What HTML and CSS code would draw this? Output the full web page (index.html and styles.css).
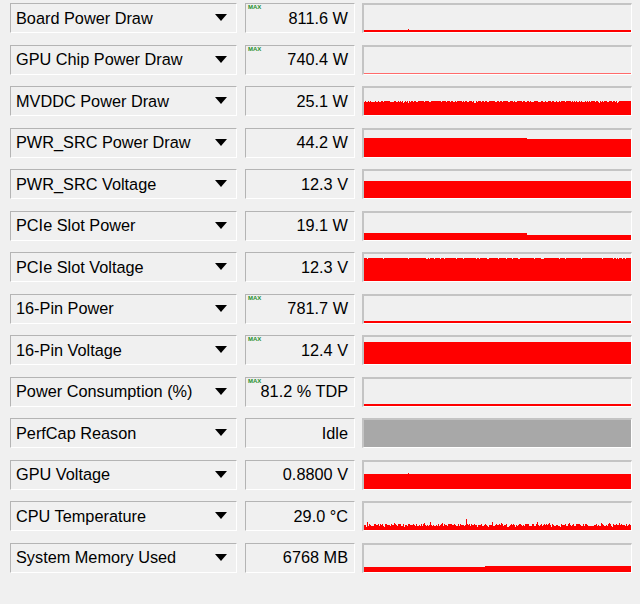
FILE: index.html
```html
<!DOCTYPE html>
<html lang="en">
<head>
<meta charset="utf-8">
<title>Sensors</title>
<link rel="stylesheet" href="styles.css">
</head>
<body>
<div class="sensors">
  <div class="row">
    <div class="name"><span>Board Power Draw</span><i class="arrow"></i></div>
    <div class="value"><b class="max">MAX</b><span>811.6 W</span></div>
    <div class="graph"></div>
  </div>
  <div class="row">
    <div class="name"><span>GPU Chip Power Draw</span><i class="arrow"></i></div>
    <div class="value"><b class="max">MAX</b><span>740.4 W</span></div>
    <div class="graph"></div>
  </div>
  <div class="row">
    <div class="name"><span>MVDDC Power Draw</span><i class="arrow"></i></div>
    <div class="value"><span>25.1 W</span></div>
    <div class="graph"></div>
  </div>
  <div class="row">
    <div class="name"><span>PWR_SRC Power Draw</span><i class="arrow"></i></div>
    <div class="value"><span>44.2 W</span></div>
    <div class="graph"></div>
  </div>
  <div class="row">
    <div class="name"><span>PWR_SRC Voltage</span><i class="arrow"></i></div>
    <div class="value"><span>12.3 V</span></div>
    <div class="graph"></div>
  </div>
  <div class="row">
    <div class="name"><span>PCIe Slot Power</span><i class="arrow"></i></div>
    <div class="value"><span>19.1 W</span></div>
    <div class="graph"></div>
  </div>
  <div class="row">
    <div class="name"><span>PCIe Slot Voltage</span><i class="arrow"></i></div>
    <div class="value"><span>12.3 V</span></div>
    <div class="graph"></div>
  </div>
  <div class="row">
    <div class="name"><span>16-Pin Power</span><i class="arrow"></i></div>
    <div class="value"><b class="max">MAX</b><span>781.7 W</span></div>
    <div class="graph"></div>
  </div>
  <div class="row">
    <div class="name"><span>16-Pin Voltage</span><i class="arrow"></i></div>
    <div class="value"><b class="max">MAX</b><span>12.4 V</span></div>
    <div class="graph"></div>
  </div>
  <div class="row">
    <div class="name"><span>Power Consumption (%)</span><i class="arrow"></i></div>
    <div class="value"><b class="max">MAX</b><span>81.2 % TDP</span></div>
    <div class="graph"></div>
  </div>
  <div class="row">
    <div class="name"><span>PerfCap Reason</span><i class="arrow"></i></div>
    <div class="value"><span>Idle</span></div>
    <div class="graph"></div>
  </div>
  <div class="row">
    <div class="name"><span>GPU Voltage</span><i class="arrow"></i></div>
    <div class="value"><span>0.8800 V</span></div>
    <div class="graph"></div>
  </div>
  <div class="row">
    <div class="name"><span>CPU Temperature</span><i class="arrow"></i></div>
    <div class="value"><span>29.0 °C</span></div>
    <div class="graph"></div>
  </div>
  <div class="row">
    <div class="name"><span>System Memory Used</span><i class="arrow"></i></div>
    <div class="value"><span>6768 MB</span></div>
    <div class="graph"></div>
  </div>
</div>
<script src="graphs.js"></script>
</body>
</html>
```

FILE: styles.css
```css
body {
  margin: 0;
  background: #f0f0f0;
  font-family: "Liberation Sans", Arial, sans-serif;
  color: #000;
}

.sensors {
  display: flex;
  flex-direction: column;
  gap: 11.5px;
  padding: 3px 0 0 10px;
}

.row {
  display: flex;
  height: 30px;
}

.name,
.value {
  box-sizing: border-box;
  border: 1px solid;
  border-color: #b4b4b4 #ffffff #ffffff #b4b4b4;
  font-size: 16.3px;
  display: flex;
  align-items: center;
}

.name {
  width: 227px;
  justify-content: space-between;
  padding: 0 9px 0 5px;
}

.arrow {
  width: 0;
  height: 0;
  border-left: 6px solid transparent;
  border-right: 6px solid transparent;
  border-top: 7px solid #000;
  margin-top: -1px;
}

.value {
  position: relative;
  margin-left: 8px;
  width: 110px;
  justify-content: flex-end;
  padding-right: 6px;
}

.max {
  position: absolute;
  left: 2px;
  top: 0px;
  font-size: 6px;
  line-height: 6px;
  font-weight: bold;
  color: #1f8f2c;
}

.graph {
  box-sizing: border-box;
  margin-left: 7px;
  width: 270px;
  border-style: solid;
  border-width: 2px 1px 1px 2px;
  border-color: #c4c4c4 #ffffff #ffffff #c4c4c4;
  background: #f0f0f0;
}

.graph svg {
  display: block;
  width: 100%;
  height: 100%;
}
```

FILE: graphs.js
```js
// Draws the sensor history graphs as column-by-column area fills.
(function () {
  var W = 267, H = 27;

  function rng(seed) {
    return function () {
      seed |= 0; seed = seed + 0x6D2B79F5 | 0;
      var t = Math.imul(seed ^ seed >>> 15, 1 | seed);
      t = t + Math.imul(t ^ t >>> 7, 61 | t) ^ t;
      return ((t ^ t >>> 14) >>> 0) / 4294967296;
    };
  }

  function steps(levels) {
    return function (x) {
      var h = levels[0][1];
      for (var i = 0; i < levels.length; i++) if (x >= levels[i][0]) h = levels[i][1];
      return h;
    };
  }

  var specs = [
    { base: steps([[0, 2]]), spikes: { 44: 3 } },
    { base: steps([[0, 1]]), color: "#ff6b6b" },
    { base: steps([[0, 14]]), noise: function (r) { return (r() < 0.3 ? -1 : 0) + (r() < 0.08 ? -1 : 0); } },
    { base: steps([[0, 19], [163, 18]]) },
    { base: steps([[0, 17]]) },
    { base: steps([[0, 7], [163, 5]]) },
    { base: steps([[0, 23]]), noise: function (r) { return r() < 0.12 ? -1 : 0; } },
    { base: steps([[0, 2]]) },
    { base: steps([[0, 22]]) },
    { base: steps([[0, 2]]) },
    { base: steps([[0, 27]]), color: "#a8a8a8" },
    { base: steps([[0, 15]]), spikes: { 44: 16 } },
    {
      base: steps([[0, 4]]),
      noise: function (r) { return Math.floor(r() * 3) + (r() < 0.15 ? Math.floor(r() * 3) : 0) - (r() < 0.1 ? 1 : 0); },
      spikes: { 3: 8, 30: 7, 78: 7, 102: 11, 128: 8, 137: 7, 185: 7, 237: 7, 238: 6, 252: 6, 255: 7 }
    },
    { base: steps([[0, 5], [121, 6]]) }
  ];

  var graphs = document.querySelectorAll(".graph");
  specs.forEach(function (s, i) {
    var r = rng(101 + i * 17);
    var d = "M0 " + H;
    for (var x = 0; x < W; x++) {
      var h = s.base(x) + (s.noise ? s.noise(r) : 0);
      if (s.spikes && s.spikes[x] !== undefined) h = s.spikes[x];
      h = Math.max(0, Math.min(H, h));
      d += " L" + x + " " + (H - h) + " L" + (x + 1) + " " + (H - h);
    }
    d += " L" + W + " " + H + " Z";
    graphs[i].innerHTML =
      '<svg viewBox="0 0 ' + W + ' ' + H + '" preserveAspectRatio="none" shape-rendering="crispEdges">' +
      '<path d="' + d + '" fill="' + (s.color || "#ff0000") + '"/></svg>';
  });
})();
```
